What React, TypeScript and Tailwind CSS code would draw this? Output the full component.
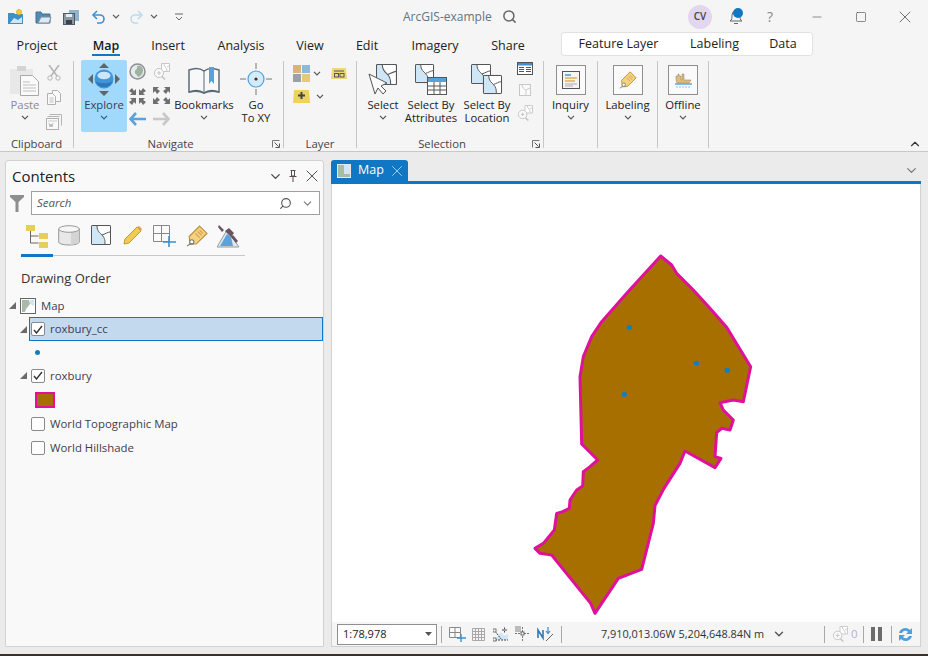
import React from 'react';
import { ChevronDown, X, Minus, Square, Search, ChevronUp } from 'lucide-react';

type IconProps = { w: number; h: number; vb?: string; children: React.ReactNode; className?: string };

const Ic: React.FC<IconProps> = ({ w, h, vb, children, className }) => (
  <svg width={w} height={h} viewBox={vb || `0 0 ${w} ${h}`} fill="none" className={className}>
    {children}
  </svg>
);

const Chev: React.FC<{ c?: string }> = ({ c = '#555' }) => (
  <Ic w={8} h={5}>
    <path d="M1 .8l3 3 3-3" stroke={c} strokeWidth="1.2" />
  </Ic>
);

const MapTile: React.FC<{ x?: number; y?: number; s?: number; c?: string; fill?: string }> = ({ x = 0, y = 0, s = 20, c = '#555', fill = '#cfe6f7' }) => (
  <g transform={`translate(${x} ${y}) scale(${s / 20})`}>
    <rect x=".5" y=".5" width="19" height="19" rx="1" fill="#fff" stroke={c} />
    <path d="M6 1c0 5 3 7 5 9 3 3 3 6 3 9H1V1z" fill={fill} />
    <path d="M6 1c0 5 3 7 5 9 3 3 3 6 3 9M11 10c3-1 6-3 8-3" stroke={c} />
    <rect x=".5" y=".5" width="19" height="19" rx="1" stroke={c} />
  </g>
);

// quick access toolbar
const NewIcon = () => (
  <Ic w={17} h={17}>
    <path d="M1 5h6l1 1h8v10H1z" fill="#3d8fc9" />
    <path d="M3 15l4-5 4 2 4-3v6z" fill="#cfe6f7" />
    <circle cx="12" cy="4" r="2.5" fill="#f0c93c" stroke="#e4b92c" />
  </Ic>
);
const OpenIcon = () => (
  <Ic w={17} h={17}>
    <path d="M1 4h5l1 2h8v9H1z" fill="#4c8db8" stroke="#4a6f88" />
    <path d="M3 15l3-6h10l-2 6z" fill="#dbeaf5" stroke="#7b8d99" />
  </Ic>
);
const SaveIcon = () => (
  <Ic w={17} h={17}>
    <path d="M6 2h10v11H6z" fill="#8fb4cc" />
    <rect x=".5" y="5.5" width="11" height="11" fill="#8b97a3" stroke="#4e5a66" />
    <rect x="3" y="6" width="6" height="3" fill="#e8edf1" />
    <rect x="3" y="12" width="6" height="4" fill="#39424b" />
  </Ic>
);
const Undo: React.FC<{ c: string; flip?: boolean }> = ({ c, flip }) => (
  <Ic w={16} h={14} className={flip ? '-scale-x-100' : ''}>
    <path d="M6 1L2 5l4 4" stroke={c} strokeWidth="1.6" />
    <path d="M2.5 5H9a4 4 0 010 8H6" stroke={c} strokeWidth="1.6" />
  </Ic>
);
const Customize = () => (
  <Ic w={8} h={8}>
    <path d="M0 1h8" stroke="#666" />
    <path d="M1 4l3 3 3-3" stroke="#666" />
  </Ic>
);

// ribbon icons
const PasteIcon = () => (
  <Ic w={30} h={30}>
    <rect x="0" y="3" width="23" height="25" fill="#e8e8e8" />
    <rect x="7" y="0" width="9" height="5" fill="#d4d4d4" />
    <path d="M10.5 9.5h12l6 6v14h-18z" fill="#fafafa" stroke="#a8a8a8" />
    <path d="M13 16h7M13 19h13M13 22h13M13 25h13" stroke="#c0c0c0" />
  </Ic>
);
const ScissorsIcon = () => (
  <Ic w={14} h={16}>
    <path d="M2 0l8 11M12 0L4 11" stroke="#b5b5b5" strokeWidth="1.6" />
    <circle cx="3" cy="13" r="2.2" stroke="#b5b5b5" />
    <circle cx="11" cy="13" r="2.2" stroke="#b5b5b5" />
  </Ic>
);
const CopyIcon = () => (
  <Ic w={14} h={15}>
    <path d="M5.5.5h5l3 3v8h-8z" fill="#fafafa" stroke="#b0b0b0" />
    <path d="M.5 3.5h5l3 3v8h-8z" fill="#fafafa" stroke="#b0b0b0" />
    <path d="M2.5 8h4M2.5 10h4M2.5 12h4" stroke="#c0c0c0" />
  </Ic>
);
const FormatIcon = () => (
  <Ic w={16} h={16}>
    <path d="M3.5.5h12v11M1.5 2.5h12" stroke="#b5b5b5" />
    <rect x=".5" y="4.5" width="12" height="11" fill="#fafafa" stroke="#b0b0b0" />
    <path d="M2 7h9" stroke="#c8c8c8" />
    <path d="M3 9l1 4 1-3 1 3 1-4" stroke="#aaa" strokeWidth=".8" />
  </Ic>
);
const ExploreIcon = () => (
  <Ic w={32} h={33}>
    <path d="M16 0l5 5H11zM16 33l-5-5h10zM0 16l5-5v10zM32 16l-5-5v10z" fill="#5f6468" />
    <circle cx="16" cy="16" r="9.5" fill="#3f95da" />
    <path d="M7.5 18a9 9 0 0017 0c-3 3-14 3-17 0z" fill="#2f78b8" />
    <ellipse cx="16" cy="12.5" rx="6.5" ry="3.8" fill="#cde6f7" />
  </Ic>
);
const GlobeIcon = () => (
  <Ic w={17} h={17}>
    <circle cx="8.5" cy="8.5" r="7.5" fill="#e4eaee" stroke="#8f8f8f" strokeWidth="1.5" />
    <path d="M8 3c3-1 6 1 6 4 0 4-3 7-5 7-1-3-4-3-3-6 1-2 3-2 2-5z" fill="#9db39f" />
  </Ic>
);
const ZoomSelIcon: React.FC<{ s?: number }> = ({ s = 17 }) => (
  <Ic w={s} h={s} vb="0 0 17 17">
    <path d="M8.5.5h8v8h-8z" fill="#fff" stroke="#c8c8c8" />
    <path d="M11 1c0 3 3 3 3 7M14 4l2-1" stroke="#c8c8c8" />
    <circle cx="6" cy="10" r="4.5" fill="#fafafa" stroke="#c4c4c4" />
    <path d="M4 10h4M6 8v4" stroke="#c4c4c4" />
    <path d="M9 13.5l3 3" stroke="#c4c4c4" strokeWidth="1.6" />
  </Ic>
);
const FixedZoom: React.FC<{ out?: boolean; c: string }> = ({ out, c }) => (
  <Ic w={17} h={17}>
    {out ? (
      <path d="M0 0h6L4 2l3 2-3 3-2-3-2 2zM17 0h-6l2 2-3 2 3 3 2-3 2 2zM0 17h6l-2-2 3-2-3-3-2 3-2-2zM17 17h-6l2-2-3-2 3-3 2 3 2-2z" fill={c} />
    ) : (
      <path d="M7 7H1l2-2-3-2 3-3 2 3 2-2zM10 7h6l-2-2 3-2-3-3-2 3-2-2zM7 10H1l2 2-3 2 3 3 2-3 2 2zM10 10h6l-2 2 3 2-3 3-2-3-2 2z" fill={c} />
    )}
  </Ic>
);
const ArrowH: React.FC<{ c: string; right?: boolean }> = ({ c, right }) => (
  <Ic w={17} h={14} className={right ? '-scale-x-100' : ''}>
    <path d="M7 1L1.5 7 7 13M2 7h15" stroke={c} strokeWidth="2.6" />
  </Ic>
);
const BookIcon = () => (
  <Ic w={32} h={28}>
    <path d="M1 3c5-2 11-2 15 1 4-3 10-3 15-1v22c-5-2-11-2-15 1-4-3-10-3-15-1z" fill="#f8f8f8" stroke="#5b6b78" strokeWidth="1.5" />
    <path d="M16 4v22" stroke="#5b6b78" />
    <path d="M21 0h5v17l-2.5-3-2.5 3z" fill="#55a2dc" />
    <path d="M1 25c5-1 11-1 15 1 4-2 10-2 15-1" stroke="#5b6b78" strokeWidth="1.5" />
  </Ic>
);
const GoToIcon = () => (
  <Ic w={32} h={32}>
    <circle cx="16" cy="16" r="8" fill="#d6ebf9" stroke="#4ca0dc" strokeWidth="1.2" />
    <circle cx="16" cy="16" r="1.6" fill="#333" />
    <path d="M16 0v6M16 26v6M0 16h6M26 16h6" stroke="#777" />
  </Ic>
);
const LayerGrid = () => (
  <Ic w={17} h={17}>
    <rect x="0" y="0" width="8" height="8" fill="#d9b37a" />
    <rect x="9" y="0" width="8" height="8" fill="#8db8d8" />
    <rect x="0" y="9" width="8" height="8" fill="#9aa0a6" />
    <rect x="9" y="9" width="8" height="8" fill="#e4c97a" />
  </Ic>
);
const BasemapIcon = () => (
  <Ic w={16} h={13}>
    <path d="M1 1h14l1 11H0z" fill="#efd878" />
    <rect x="3" y="3.5" width="10" height="1" fill="#555" />
    <rect x="3.5" y="6.5" width="4" height="3.5" stroke="#555" />
    <rect x="9" y="6.5" width="4" height="3.5" stroke="#555" />
  </Ic>
);
const AddLayerIcon = () => (
  <Ic w={17} h={14}>
    <path d="M1 1h15l1 13H0z" fill="#efd25a" />
    <path d="M8.5 3v7M5 6.5h7" stroke="#444" strokeWidth="2" />
  </Ic>
);
const SelectIcon = () => (
  <Ic w={30} h={32}>
    <MapTile x={8} y={0} s={21} />
    <path d="M1 10l6 20 3-6 5 6 3-3-5-5 6-3z" fill="#fafafa" stroke="#555" />
  </Ic>
);
const SelectAttrIcon = () => (
  <Ic w={32} h={32}>
    <MapTile x={0} y={0} s={19} />
    <rect x="12.5" y="13.5" width="19" height="17" fill="#fff" stroke="#555" />
    <rect x="13" y="14" width="18" height="4" fill="#55a2dc" />
    <path d="M13 22h18M13 26h18M19 18v12M25 18v12" stroke="#555" />
  </Ic>
);
const SelectLocIcon = () => (
  <Ic w={32} h={32}>
    <MapTile x={0} y={0} s={20} />
    <MapTile x={12} y={11} s={19} />
  </Ic>
);
const TableIcon = () => (
  <Ic w={16} h={13}>
    <rect x=".5" y=".5" width="15" height="12" fill="#fff" stroke="#555" />
    <rect x="1" y="1" width="14" height="2.5" fill="#3f8fcc" />
    <path d="M2 5.5h5M2 7.5h5M2 9.5h5M9 5.5h5M9 7.5h5M9 9.5h5" stroke="#555" />
  </Ic>
);
const ClearSelIcon = () => (
  <Ic w={12} h={12}>
    <rect x=".5" y=".5" width="11" height="11" fill="#fafafa" stroke="#c8c8c8" />
    <path d="M3 1c0 3 3 4 4 6 0 2 0 3 0 4M7 6l4-2" stroke="#c8c8c8" />
  </Ic>
);
const BoxIcon: React.FC<{ children: React.ReactNode }> = ({ children }) => (
  <div className="flex h-[30px] w-[30px] items-center justify-center border border-[#8f8f8f] bg-[#fafafa]">{children}</div>
);
const InquiryGlyph = () => (
  <Ic w={18} h={18}>
    <rect x=".5" y=".5" width="17" height="17" fill="#f4f4f4" stroke="#555" />
    <path d="M3 4h6" stroke="#3f8fcc" strokeWidth="1.4" />
    <path d="M3 7h12" stroke="#e2a83c" strokeWidth="1.4" />
    <path d="M3 10h10" stroke="#e2a83c" strokeWidth="1.4" />
    <path d="M3 13h12M3 15h8" stroke="#aaa" />
  </Ic>
);
const TagIcon: React.FC<{ s?: number }> = ({ s = 18 }) => (
  <Ic w={s} h={s} vb="0 0 21 21">
    <path d="M13 1l7 7-10 10-6 .5L3 11z" fill="#f5d27e" stroke="#b98a3a" />
    <path d="M9 8l4 4M11 6l4 4M13 5l3 3" stroke="#cfa050" />
    <circle cx="5.5" cy="16" r="2" fill="#fff" stroke="#777" />
    <path d="M4 18l-3 2" stroke="#777" />
  </Ic>
);
const BoatGlyph = () => (
  <Ic w={17} h={15}>
    <path d="M1 7V3h2v-2h1v2h2v4h1V1h2v6h7l-2 3H2z" fill="#e0bd7e" stroke="#8a7a60" strokeWidth=".5" />
    <path d="M0 11h17" stroke="#4ca0dc" strokeWidth="1.4" />
    <path d="M1 14h15" stroke="#8cc4ea" strokeWidth="1.2" strokeDasharray="2 1" />
  </Ic>
);
const Launcher = () => (
  <Ic w={8} h={8}>
    <path d="M.5 7.5v-7h7" stroke="#777" />
    <path d="M7.5 3.5v4h-4M2.5 2.5l4 4" stroke="#555" />
  </Ic>
);

const Sep = () => <div className="mt-[3px] h-[87px] w-px shrink-0 bg-[#c6c6c6]" />;

const Group: React.FC<{ label: string; launcher?: boolean; children: React.ReactNode; cls: string }> = ({ label, launcher, children, cls }) => (
  <div className={`flex shrink-0 flex-col pt-[2px] ${cls}`}>
    <div className="flex h-[77px]">{children}</div>
    <div className="flex h-[13px] items-center">
      <div className="flex-1 text-center text-[11.3px] leading-[13px] text-[#444]">{label}</div>
      {launcher && (
        <div className="flex w-[16px] justify-center pl-[2px]">
          <Launcher />
        </div>
      )}
    </div>
  </div>
);

const Big: React.FC<{ icon: React.ReactNode; lines: string[]; chev?: boolean; cls: string; dim?: boolean; hot?: boolean }> = ({ icon, lines, chev, cls, dim, hot }) => (
  <div className={`flex h-[72px] shrink-0 flex-col items-center ${cls} ${hot ? 'rounded-[2px] bg-[#a0d9fb]' : ''}`}>
    <div className="flex h-[38px] items-center justify-center">{icon}</div>
    {lines.map((l) => (
      <div key={l} className={`whitespace-nowrap text-[11.3px] leading-[13px] ${dim ? 'text-[#8a8a8a]' : hot ? 'text-[#3a3a5a]' : 'text-[#222]'}`}>
        {l}
      </div>
    ))}
    {chev && (
      <div className="flex h-[13px] items-center">
        <Chev c={hot ? '#2a5a8a' : '#555'} />
      </div>
    )}
  </div>
);

const tabs: [string, string][] = [
  ['Project', 'w-[66px]'],
  ['Map', 'w-[72px]'],
  ['Insert', 'w-[52px]'],
  ['Analysis', 'w-[94px]'],
  ['View', 'w-[44px]'],
  ['Edit', 'w-[70px]'],
  ['Imagery', 'w-[66px]'],
  ['Share', 'w-[80px]'],
];

const TitleBar = () => (
  <div className="flex h-[33px] shrink-0 items-center">
    <div className="ml-[7px]"><NewIcon /></div>
    <div className="ml-[11px]"><OpenIcon /></div>
    <div className="ml-[11px]"><SaveIcon /></div>
    <div className="ml-[11px]"><Undo c="#3f8fd2" /></div>
    <div className="ml-[5px]"><Chev /></div>
    <div className="ml-[8px]"><Undo c="#bcdaf0" flip /></div>
    <div className="ml-[6px]"><Chev /></div>
    <div className="ml-[17px]"><Customize /></div>
    <div className="ml-[220px] w-[90px] whitespace-nowrap text-[12px] text-[#5f7485]">ArcGIS-example</div>
    <Search size={15} strokeWidth={2.4} className="ml-[9px] text-[#666]" />
    <div className="ml-[171px] flex h-[24px] w-[24px] items-center justify-center rounded-full bg-[#e2d6f0] text-[10px] font-semibold text-[#444]">CV</div>
    <div className="relative ml-[16px] h-[18px] w-[18px]">
      <svg width="18" height="18" viewBox="0 0 18 18" fill="none">
        <path d="M2 13c2-1 2-3 2-6a4 4 0 018 0c0 3 0 5 2 6z" stroke="#666" />
        <path d="M6 15.500h4" stroke="#666" />
      </svg>
      <div className="absolute left-[5px] top-0 h-[10px] w-[10px] rounded-full bg-[#0f77c4]" />
    </div>
    <div className="ml-[21px] w-[10px] text-[14px] text-[#888]">?</div>
    <Minus size={14} strokeWidth={1} className="ml-[33px] text-[#444]" />
    <Square size={12} strokeWidth={1.2} className="ml-[31px] text-[#444]" />
    <X size={20} strokeWidth={0.9} className="ml-[28px] text-[#444]" />
  </div>
);

const TabRow = () => (
  <div className="flex h-[25px] shrink-0 items-center pl-[4px] pt-[1px] text-[12.5px] text-[#222]">
    {tabs.map(([t, w]) => (
      <div key={t} className={`relative flex h-full items-center justify-center ${w}`}>
        <span className={t === 'Map' ? 'font-semibold text-[#1a1a1a]' : ''}>{t}</span>
        {t === 'Map' && <div className="absolute bottom-[2px] left-[22px] h-[2px] w-[28px] bg-[#0f77c4]" />}
      </div>
    ))}
    <div className="-mt-[2px] ml-[13px] flex h-[24px] w-[252px] self-start rounded-[3px] border border-[#e2e2e2] bg-white pt-[1px]">
      <div className="flex w-[113px] items-center justify-center">Feature Layer</div>
      <div className="flex w-[79px] items-center justify-center">Labeling</div>
      <div className="flex w-[58px] items-center justify-center">Data</div>
    </div>
  </div>
);

const Ribbon = () => (
  <div className="relative flex h-[94px] shrink-0 border-b border-[#c8c8c8]">
    <Group label="Clipboard" cls="w-[73px]">
      <Big cls="ml-[8px] w-[34px]" dim icon={<div className="mt-[4px]"><PasteIcon /></div>} lines={['Paste']} chev />
      <div className="ml-[4px] flex flex-col items-center gap-[9px] pt-[5px]">
        <ScissorsIcon />
        <CopyIcon />
        <FormatIcon />
      </div>
    </Group>
    <Sep />
    <Group label="Navigate" launcher cls="w-[209px]">
      <Big cls="ml-[7px] w-[46px]" hot icon={<ExploreIcon />} lines={['Explore']} chev />
      <div className="ml-[2px] grid w-[42px] grid-cols-2 content-start gap-x-[6px] gap-y-[7px] pt-[2px]">
        <div className="pt-[1px]"><GlobeIcon /></div>
        <div className="pt-[1px]"><ZoomSelIcon /></div>
        <div className="pt-[1px]"><FixedZoom c="#6f6f6f" /></div>
        <FixedZoom out c="#6f6f6f" />
        <ArrowH c="#5aa2dc" />
        <ArrowH c="#c8c8c8" right />
      </div>
      <Big cls="ml-[3px] w-[60px]" icon={<div className="mt-[4px]"><BookIcon /></div>} lines={['Bookmarks']} chev />
      <Big cls="ml-[5px] w-[34px]" icon={<GoToIcon />} lines={['Go', 'To XY']} />
    </Group>
    <Sep />
    <Group label="Layer" cls="w-[72px]">
      <div className="ml-[9px] flex flex-col gap-[7px] pt-[5px]">
        <div className="flex items-center gap-[3px]">
          <LayerGrid />
          <Chev />
          <div className="ml-[7px]"><BasemapIcon /></div>
        </div>
        <div className="flex items-center gap-[6px]">
          <AddLayerIcon />
          <Chev />
        </div>
      </div>
    </Group>
    <Sep />
    <Group label="Selection" launcher cls="w-[186px]">
      <Big cls="ml-[7px] w-[38px]" icon={<div className="mt-[2px]"><SelectIcon /></div>} lines={['Select']} chev />
      <Big cls="ml-[2px] w-[54px]" icon={<div className="mt-[2px]"><SelectAttrIcon /></div>} lines={['Select By', 'Attributes']} />
      <Big cls="ml-[2px] w-[54px]" icon={<div className="mt-[2px]"><SelectLocIcon /></div>} lines={['Select By', 'Location']} />
      <div className="ml-[2px] flex w-[18px] flex-col items-center gap-[9px] pt-[2px]">
        <TableIcon />
        <ClearSelIcon />
        <ZoomSelIcon s={16} />
      </div>
    </Group>
    <Sep />
    <Group label="" cls="w-[53px]">
      <Big cls="w-[53px]" icon={<div className="mt-[2px]"><BoxIcon><InquiryGlyph /></BoxIcon></div>} lines={['Inquiry']} chev />
    </Group>
    <Sep />
    <Group label="" cls="w-[59px]">
      <Big cls="w-[59px]" icon={<div className="mt-[2px]"><BoxIcon><TagIcon /></BoxIcon></div>} lines={['Labeling']} chev />
    </Group>
    <Sep />
    <Group label="" cls="w-[50px]">
      <Big cls="w-[50px]" icon={<div className="mt-[2px]"><BoxIcon><BoatGlyph /></BoxIcon></div>} lines={['Offline']} chev />
    </Group>
    <Sep />
    <ChevronUp size={14} strokeWidth={2} className="absolute bottom-0 right-[6px] text-[#333]" />
  </div>
);

const Tri = () => (
  <Ic w={7} h={7} className="shrink-0">
    <path d="M7 0v7H0z" fill="#6b6b6b" />
  </Ic>
);

const Check: React.FC<{ on?: boolean }> = ({ on }) => (
  <div className="flex h-[14px] w-[14px] shrink-0 items-center justify-center rounded-[2px] border border-[#8a8a8a] bg-white">
    {on && (
      <svg width="10" height="9" viewBox="0 0 10 9" fill="none">
        <path d="M1 5l2.5 3L9 1" stroke="#333" strokeWidth="1.4" />
      </svg>
    )}
  </div>
);

const TreeIconMap = () => (
  <Ic w={16} h={16}>
    <rect x=".5" y=".5" width="15" height="15" fill="#fff" stroke="#666" />
    <path d="M2 14V2h7l1 4-4 5-1 3z" fill="#a9bba6" />
    <path d="M10 2h4v6l-4-2z" fill="#cfe6f7" />
  </Ic>
);

const paneIcons = [
  <Ic w={22} h={23} key="a">
    <rect x="0" y="0" width="9" height="6" fill="#e8cd5a" />
    <path d="M4.5 6v12h8M4.5 11h8" stroke="#666" />
    <rect x="13" y="8" width="9" height="6" fill="#e8cd5a" />
    <rect x="13" y="17" width="9" height="6" fill="#e8cd5a" />
  </Ic>,
  <Ic w={22} h={21} key="b">
    <path d="M.7 4v13c0 4 20.600 4 20.600 0V4z" fill="#e8e8e8" stroke="#999" />
    <path d="M13 6v14l8-2V5z" fill="#d4d4d4" />
    <ellipse cx="11" cy="4" rx="10.300" ry="3.300" fill="#f6f6f6" stroke="#999" />
  </Ic>,
  <Ic w={20} h={20} key="c">
    <MapTile s={20} c="#555" />
  </Ic>,
  <Ic w={20} h={20} key="d">
    <path d="M1 19l1-5L14 2l4 4L6 18z" fill="#f0cc55" stroke="#c99c2e" />
    <path d="M14 2l2-1 3 3-1 2z" fill="#e39a5a" />
  </Ic>,
  <Ic w={24} h={23} key="e">
    <path d="M.5.5h16v16H.5zM.5 8.500h16M8.500.500v16" stroke="#888" fill="#fafafa" />
    <path d="M16 11v11M10 17h13" stroke="#3f8fcc" strokeWidth="1.600" />
  </Ic>,
  <TagIcon s={22} key="f" />,
  <Ic w={24} h={23} key="g">
    <path d="M0 22L10 5l12 17z" fill="#dbe9f4" stroke="#999" />
    <path d="M3 21l7-12 4 3 2 9z" fill="#5aa2dc" />
    <path d="M2 0l5 5-2 2-4-5zM8 6l4-3 5 5-3 4zM16 10l5 6-2 2-5-6z" fill="#6b5360" />
  </Ic>,
];

const Row: React.FC<{ cls: string; children: React.ReactNode }> = ({ cls, children }) => (
  <div className={`flex shrink-0 items-center text-[11.4px] text-[#3d3d4d] ${cls}`}>{children}</div>
);

const ContentsPane = () => (
  <div className="flex h-[487px] w-[319px] shrink-0 flex-col rounded-t-[3px] border border-[#d2d2d2] bg-[#f9f9f9]">
    <div className="flex h-[30px] shrink-0 items-center pl-[6px] pr-[1px]">
      <div className="flex-1 text-[15px] text-[#222]">Contents</div>
      <ChevronDown size={15} className="mr-[6px] text-[#444]" />
      <svg width="8" height="12" viewBox="0 0 8 12" fill="none" className="mr-[5px]">
        <path d="M1.500.500h5M2.500 1v5h3V1M.500 6.500h7M4 7v5" stroke="#5a4a55" />
      </svg>
      <X size={20} strokeWidth={1.1} className="text-[#444]" />
    </div>
    <div className="flex h-[24px] shrink-0 items-center pl-[4px] pr-[3px]">
      <svg width="14" height="17" viewBox="0 0 14 17" fill="none" className="mr-[7px]">
        <path d="M0 0h14v2L8.500 7v10h-3V7L0 2z" fill="#8e8e8e" />
      </svg>
      <div className="flex h-[24px] flex-1 items-center border border-[#a0a0a0] bg-white pl-[5px] pr-[5px]">
        <span className="flex-1 text-[11.5px] italic text-[#555]">Search</span>
        <Search size={13} strokeWidth={2} className="mr-[9px] -scale-x-100 text-[#555]" />
        <ChevronDown size={13} className="text-[#777]" />
      </div>
    </div>
    <div className="ml-[15px] flex h-[41px] w-[224px] shrink-0 border-b border-[#c8c8c8]">
      {paneIcons.map((ic, i) => (
        <div key={i} className={`flex h-[42px] w-[32px] justify-center pt-[10px] ${i === 0 ? 'border-b-[3px] border-[#0f77c4]' : ''}`}>
          {ic}
        </div>
      ))}
    </div>
    <div className="ml-[15px] flex h-[38px] shrink-0 items-center pt-[7px] text-[13px] text-[#333]">Drawing Order</div>
    <Row cls="h-[23px] pl-[3px]">
      <Tri />
      <div className="ml-[4px]"><TreeIconMap /></div>
      <span className="ml-[5px]">Map</span>
    </Row>
    <Row cls="h-[24px] pl-[14px]">
      <Tri />
      <div className="ml-[2px] flex h-[24px] w-[294px] items-center border border-[#0f77c4] bg-[#c3d9ee]">
        <div className="ml-[1px]"><Check on /></div>
        <span className="ml-[5px]">roxbury_cc</span>
      </div>
    </Row>
    <Row cls="h-[23px] pl-[29px]">
      <div className="h-[5px] w-[5px] rounded-full bg-[#0f7fbd]" />
    </Row>
    <Row cls="h-[23px] pl-[14px]">
      <Tri />
      <div className="ml-[4px]"><Check on /></div>
      <span className="ml-[5px]">roxbury</span>
    </Row>
    <Row cls="h-[25px] pl-[29px]">
      <div className="h-[16px] w-[20px] border-2 border-[#e0109a] bg-[#a66f00]" />
    </Row>
    <Row cls="h-[24px] pl-[25px]">
      <Check />
      <span className="ml-[5px]">World Topographic Map</span>
    </Row>
    <Row cls="h-[24px] pl-[25px]">
      <Check />
      <span className="ml-[5px]">World Hillshade</span>
    </Row>
  </div>
);

const shape =
  '422,48 455,75 470,100 520,150 570,205 620,262 692,380 670,485 640,480 600,488 610,510 640,540 630,570 605,565 590,578 585,650 603,655 585,683 495,633 480,670 432,745 405,797 400,850 365,988 295,1015 225,1120 212,1090 95,945 60,940 45,925 70,910 103,870 110,820 128,815 148,805 150,780 170,750 188,738 190,695 210,680 233,660 185,612 180,410 190,350 215,290 245,245 320,160';

const points = [
  [328, 262],
  [529, 370],
  [622, 391],
  [313, 463],
];

const StatusSep = () => <div className="h-[17px] w-px shrink-0 bg-[#a8a8a8]" />;

const StatusBar = () => (
  <div className="flex h-[25px] shrink-0 items-center border-x border-b border-[#d2d2d2] bg-[#f5f5f5] pl-[5px]">
    <div className="flex h-[21px] w-[100px] items-center border border-[#8f8f8f] bg-white pl-[5px] pr-[4px] text-[11px] text-[#222]">
      <span className="flex-1">1:78,978</span>
      <svg width="7" height="4" viewBox="0 0 7 4"><path d="M0 0h7L3.500 4z" fill="#555" /></svg>
    </div>
    <div className="ml-[4px]"><StatusSep /></div>
    <div className="ml-[7px]">
      <Ic w={17} h={15}>
        <path d="M.5.500h11v10H.5zM.5 5.500h11M6 .500v10" stroke="#888" fill="#fafafa" />
        <path d="M12 7v8M8 11h9" stroke="#3f8fcc" strokeWidth="1.400" />
      </Ic>
    </div>
    <div className="ml-[6px]">
      <Ic w={13} h={13}>
        <path d="M.5.500h12v12H.5zM.5 3.500h12M.5 6.500h12M.5 9.500h12M3.500.500v12M6.500.500v12M9.500.500v12" stroke="#a8a8a8" />
      </Ic>
    </div>
    <div className="ml-[8px]">
      <Ic w={16} h={15}>
        <path d="M2 13L8 5l3 4 4-2v6z" fill="#cfe6f7" />
        <path d="M2 13h13M2 4l6 8M9 3h5M11.500.500v5" stroke="#444" strokeDasharray="2 1" />
        <rect x="0" y="2" width="3" height="3" fill="#fff" stroke="#555" strokeWidth=".8" />
        <rect x="0" y="11" width="3" height="3" fill="#fff" stroke="#555" strokeWidth=".8" />
      </Ic>
    </div>
    <div className="ml-[6px]">
      <Ic w={15} h={16}>
        <rect x="0" y="0" width="6" height="6" fill="#bbb" />
        <path d="M7.500 1v14M0 7.500h15" stroke="#777" strokeDasharray="2 1" />
        <rect x="6" y="6" width="3" height="3" fill="#fff" stroke="#444" strokeWidth=".8" />
      </Ic>
    </div>
    <div className="ml-[7px]">
      <Ic w={16} h={14}>
        <path d="M1 11V3l5 8V3" stroke="#2f78b8" strokeWidth="1.600" />
        <path d="M11 0v6M9 4l2 2.500L13 4" stroke="#3f8fcc" strokeWidth="1.200" />
        <path d="M9 14l7-7" stroke="#666" />
      </Ic>
    </div>
    <div className="ml-[8px]"><StatusSep /></div>
    <div className="ml-[39px] w-[165px] whitespace-nowrap text-[10.9px] text-[#333]">7,910,013.06W 5,204,648.84N m</div>
    <ChevronDown size={14} strokeWidth={2.4} className="ml-[6px] text-[#555]" />
    <div className="ml-[38px]"><StatusSep /></div>
    <div className="ml-[7px]"><ZoomSelIcon s={16} /></div>
    <span className="ml-[3px] text-[11.5px] text-[#b5b5b5]">0</span>
    <div className="ml-[5px]"><StatusSep /></div>
    <div className="ml-[7px] flex gap-[3px]">
      <div className="h-[14px] w-[4px] bg-[#6b6b6b]" />
      <div className="h-[14px] w-[4px] bg-[#6b6b6b]" />
    </div>
    <div className="ml-[9px]"><StatusSep /></div>
    <div className="ml-[5px]">
      <Ic w={17} h={17}>
        <path d="M2 7a6.500 6.500 0 0111-3l2-2v6H9l2-2a3.500 3.500 0 00-6 1z" fill="#4f9fdc" />
        <path d="M15 10a6.500 6.500 0 01-11 3l-2 2V9h6l-2 2a3.500 3.500 0 006-1z" fill="#4f9fdc" />
      </Ic>
    </div>
  </div>
);

const MapDock = () => (
  <div className="flex h-[487px] w-[590px] shrink-0 flex-col">
    <div className="flex h-[21px] shrink-0 items-center">
      <div className="flex h-full w-[77px] items-center rounded-t-[3px] bg-[#0f77c4] pl-[6px] text-[12.5px] text-white">
        <div className="h-[14px] w-[14px] shrink-0 border border-[#e8e8e8] bg-[#a9bba6]">
          <div className="ml-[6px] h-[9px] w-[6px] bg-[#cfe6f7]" />
        </div>
        <span className="ml-[7px]">Map</span>
        <X size={18} strokeWidth={1} className="ml-[4px] text-[#cfe6f7]" />
      </div>
      <ChevronDown size={15} className="ml-auto mr-[2px] text-[#777]" />
    </div>
    <div className="h-[3px] shrink-0 bg-[#0f77c4]" />
    <div className="relative flex-1 border-x border-[#d2d2d2] bg-white">
      <svg width="250" height="390" viewBox="0 0 750 1170" fill="none" className="absolute left-[188px] top-[56px]">
        <polygon points={shape} fill="#a66f00" stroke="#e0109a" strokeWidth="9" strokeLinejoin="round" />
        {points.map(([x, y]) => (
          <circle key={x} cx={x} cy={y} r="8" fill="#0f7fbd" />
        ))}
      </svg>
    </div>
    <StatusBar />
  </div>
);

export default function App() {
  return (
    <div className="flex h-[656px] w-[928px] flex-col overflow-hidden bg-[#f5f5f5] font-['Open_Sans','Noto_Sans',sans-serif]">
      <TitleBar />
      <TabRow />
      <Ribbon />
      <div className="flex flex-1 gap-[7px] bg-[#ebebeb] pl-[5px] pt-[8px]">
        <ContentsPane />
        <MapDock />
      </div>
      <div className="h-[2px] shrink-0 bg-[#3a3226]" />
    </div>
  );
}
